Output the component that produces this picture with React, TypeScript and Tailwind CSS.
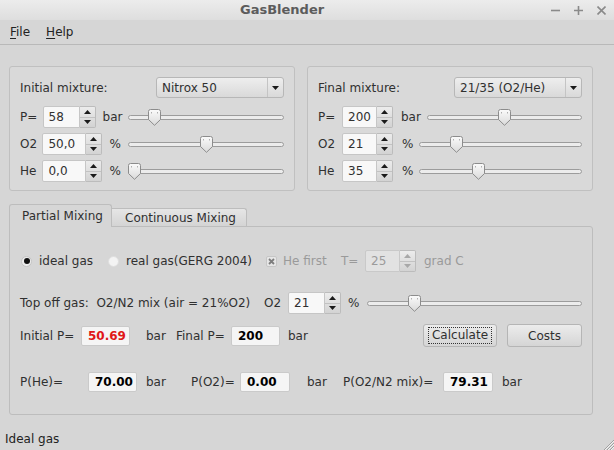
import React from "react";

const Tri = ({ up, color = "#1a1a1a" }: { up?: boolean; color?: string }) => (
  <svg width="7" height="4" viewBox="0 0 7 4">
    <path d={up ? "M0 4 L3.5 0 L7 4 Z" : "M0 0 L7 0 L3.5 4 Z"} fill={color} />
  </svg>
);

const SpinBox = ({ value, fieldW, disabled }: { value: string; fieldW: string; disabled?: boolean }) => (
  <div className="flex h-[22px] shrink-0">
    <div
      className={
        disabled
          ? `${fieldW} flex items-center pl-[5px] bg-[#e2e2e2] border border-[#c9c9c9] rounded-l-[2px] text-[#9b9b9b]`
          : `${fieldW} flex items-center pl-[5px] bg-[#f8f8f8] border border-[#c6c6c6] rounded-l-[2px]`
      }
    >
      {value}
    </div>
    <div className="w-[16px] flex flex-col border border-l-0 border-[#bcbcbc] rounded-r-[2px] bg-linear-to-b from-[#ececec] to-[#d3d3d3]">
      <div className="flex-1 flex items-center justify-center border-b border-[#c2c2c2]">
        <Tri up color={disabled ? "#a8a8a8" : "#1a1a1a"} />
      </div>
      <div className="flex-1 flex items-center justify-center">
        <Tri color={disabled ? "#a8a8a8" : "#1a1a1a"} />
      </div>
    </div>
  </div>
);

const Handle = () => (
  <svg width="13" height="17" viewBox="0 0 13 17">
    <defs>
      <linearGradient id="hg" x1="0" y1="0" x2="0" y2="1">
        <stop offset="0" stopColor="#fbfbfb" />
        <stop offset="1" stopColor="#dadada" />
      </linearGradient>
    </defs>
    <path d="M0.5 2.5 Q0.5 0.5 2.5 0.5 H10.5 Q12.5 0.5 12.5 2.5 V10.5 L6.5 16.3 L0.5 10.5 Z" fill="url(#hg)" stroke="#8c8c8c" />
    <path d="M3.5 3 L3.5 4.5 M9.5 3 L9.5 4.5" stroke="#b0b0b0" />
  </svg>
);

const Slider = ({ w, pos }: { w: string; pos: string }) => (
  <div className={`${w} relative h-[22px] flex items-center shrink-0`}>
    <div className="w-full h-[5px] rounded-full border border-[#9c9c9c] bg-[#ececec]" />
    <div className={`absolute top-[3px] ${pos}`}>
      <Handle />
    </div>
  </div>
);

const Combo = ({ text, w }: { text: string; w: string }) => (
  <div className={`${w} h-[21px] flex rounded-[3px] border border-[#b7b7b7] bg-linear-to-b from-[#eeeeee] to-[#d9d9d9] shrink-0`}>
    <div className="flex-1 flex items-center pl-[5px]">{text}</div>
    <div className="w-[16px] flex items-center justify-center border-l border-[#c4c4c4]">
      <Tri />
    </div>
  </div>
);

const Value = ({ v, w, red }: { v: string; w: string; red?: boolean }) => (
  <div
    className={
      red
        ? `${w} h-[20px] flex items-center pl-[6px] bg-[#f5f5f5] border border-[#cacaca] rounded-[2px] font-bold text-[#e01818] shrink-0`
        : `${w} h-[20px] flex items-center pl-[6px] bg-[#f5f5f5] border border-[#cacaca] rounded-[2px] font-bold text-black shrink-0`
    }
  >
    {v}
  </div>
);

const Btn = ({ children, focus }: { children: string; focus?: boolean }) => (
  <div className="w-full h-[23px] flex items-center justify-center rounded-[3px] border border-[#b5b5b5] bg-linear-to-b from-[#ececec] to-[#d5d5d5]">
    {focus ? <span className="px-[3px] leading-[15px] border border-dotted border-[#333]">{children}</span> : children}
  </div>
);

export default function App() {
  return (
    <div className="relative w-[614px] h-[450px] overflow-hidden bg-[#d6d6d6] text-[12px] text-[#303030] font-['DejaVu_Sans',sans-serif] flex flex-col">
      {/* title bar */}
      <div className="h-[20px] flex items-center bg-linear-to-b from-[#ececec] to-[#dedede] shrink-0">
        <div className="pl-[240px] text-[13px] font-bold text-[#5c5c5c]">GasBlender</div>
        <div className="ml-auto flex items-center gap-[14px] pr-[8px]">
          <svg width="9" height="9" viewBox="0 0 9 9"><path d="M0 4.5 H9" stroke="#8a8a8a" strokeWidth="1.6" /></svg>
          <svg width="9" height="9" viewBox="0 0 9 9"><path d="M0 4.5 H9 M4.5 0 V9" stroke="#8a8a8a" strokeWidth="1.6" /></svg>
          <svg width="9" height="9" viewBox="0 0 9 9"><path d="M0.5 0.5 L8.5 8.5 M8.5 0.5 L0.5 8.5" stroke="#8a8a8a" strokeWidth="1.6" /></svg>
        </div>
      </div>

      {/* menu */}
      <div className="h-[25px] flex items-center border-b border-[#b9b9b9] text-[#222] shrink-0">
        <span className="pl-[10px]"><span className="underline underline-offset-2">F</span>ile</span>
        <span className="pl-[16px]"><span className="underline underline-offset-2">H</span>elp</span>
      </div>

      <div className="px-[9px] pt-[21px] flex flex-col">
        {/* mixture groups */}
        <div className="flex gap-[12px]">
          <div className="w-[286px] h-[125px] rounded-[3px] border border-[#c0c0c0] bg-[#d9d9d9] pt-[10px] pl-[10px] pr-[10px] flex flex-col">
            <div className="flex items-center">
              <span className="w-[137px]">Initial mixture:</span>
              <Combo text="Nitrox 50" w="w-[128px]" />
            </div>
            <div className="flex flex-col gap-[5px] mt-[8px]">
              <div className="flex items-center">
                <span className="w-[23px]">P=</span>
                <SpinBox value="58" fieldW="w-[37px]" />
                <span className="w-[33px] pl-[7px]">bar</span>
                <Slider w="w-[156px]" pos="left-[20px]" />
              </div>
              <div className="flex items-center">
                <span className="w-[23px]">O2</span>
                <SpinBox value="50,0" fieldW="w-[44px]" />
                <span className="w-[26px] pl-[7px]">%</span>
                <Slider w="w-[156px]" pos="left-[72px]" />
              </div>
              <div className="flex items-center">
                <span className="w-[23px]">He</span>
                <SpinBox value="0,0" fieldW="w-[44px]" />
                <span className="w-[26px] pl-[7px]">%</span>
                <Slider w="w-[156px]" pos="left-[0px]" />
              </div>
            </div>
          </div>

          <div className="w-[286px] h-[125px] rounded-[3px] border border-[#c0c0c0] bg-[#d9d9d9] pt-[10px] pl-[10px] pr-[10px] flex flex-col">
            <div className="flex items-center">
              <span className="w-[136px]">Final mixture:</span>
              <Combo text="21/35 (O2/He)" w="w-[128px]" />
            </div>
            <div className="flex flex-col gap-[5px] mt-[8px]">
              <div className="flex items-center">
                <span className="w-[24px]">P=</span>
                <SpinBox value="200" fieldW="w-[35px]" />
                <span className="w-[34px] pl-[8px]">bar</span>
                <Slider w="w-[155px]" pos="left-[71px]" />
              </div>
              <div className="flex items-center">
                <span className="w-[24px]">O2</span>
                <SpinBox value="21" fieldW="w-[35px]" />
                <span className="w-[26px] pl-[9px]">%</span>
                <Slider w="w-[163px]" pos="left-[31px]" />
              </div>
              <div className="flex items-center">
                <span className="w-[24px]">He</span>
                <SpinBox value="35" fieldW="w-[35px]" />
                <span className="w-[26px] pl-[9px]">%</span>
                <Slider w="w-[163px]" pos="left-[53px]" />
              </div>
            </div>
          </div>
        </div>

        {/* tabs */}
        <div className="mt-[13px] flex flex-col">
          <div className="flex items-end h-[22px]">
            <div className="w-[103px] h-[23px] -mb-[1px] z-10 flex items-center pl-[12px] rounded-t-[3px] border border-b-0 border-[#bdbdbd] bg-[#d6d6d6]">
              Partial Mixing
            </div>
            <div className="w-[135px] h-[18px] flex items-center pl-[13px] rounded-tr-[3px] border border-l-0 border-b-0 border-[#bdbdbd] bg-linear-to-b from-[#e6e6e6] to-[#d4d4d4]">
              Continuous Mixing
            </div>
          </div>
          <div className="w-[584px] h-[189px] border border-[#bdbdbd] rounded-b-[3px] rounded-tr-[3px] bg-[#d6d6d6] flex flex-col pt-[23px]">
            {/* radio row */}
            <div className="h-[22px] flex items-center pl-[11px]">
              <span className="w-[11px] h-[11px] rounded-full bg-[#ececec] border border-[#c4c4c4] flex items-center justify-center shrink-0">
                <span className="w-[6px] h-[6px] rounded-full bg-[#111]" />
              </span>
              <span className="w-[76px] pl-[7px] shrink-0">ideal gas</span>
              <span className="w-[11px] h-[11px] rounded-full bg-[#f3f3f3] border border-[#dedede] shrink-0" />
              <span className="w-[147px] pl-[7px] shrink-0">real gas(GERG 2004)</span>
              <span className="w-[11px] h-[11px] rounded-[2px] bg-[#e6e6e6] border border-[#c6c6c6] flex items-center justify-center shrink-0">
                <svg width="7" height="7" viewBox="0 0 7 7"><path d="M1 1 L6 6 M6 1 L1 6" stroke="#7d7d7d" strokeWidth="1.8" /></svg>
              </span>
              <span className="w-[64px] pl-[6px] text-[#9a9a9a] shrink-0">He first</span>
              <span className="w-[24px] text-[#9a9a9a] shrink-0">T=</span>
              <SpinBox value="25" fieldW="w-[35px]" disabled />
              <span className="pl-[8px] text-[#9a9a9a]">grad C</span>
            </div>
            {/* top off row */}
            <div className="h-[22px] flex items-center pl-[10px] mt-[20px]">
              <span className="w-[244px] shrink-0 whitespace-pre">Top off gas:  O2/N2 mix (air = 21%O2)</span>
              <span className="w-[24px] shrink-0">O2</span>
              <SpinBox value="21" fieldW="w-[37px]" />
              <span className="w-[26px] pl-[7px] shrink-0">%</span>
              <Slider w="w-[215px]" pos="left-[41px]" />
            </div>
            {/* pressure row */}
            <div className="h-[23px] flex items-center pl-[10px] mt-[10px]">
              <span className="w-[61px] shrink-0">Initial P=</span>
              <Value v="50.69" w="w-[49px]" red />
              <span className="w-[46px] pl-[16px] shrink-0">bar</span>
              <span className="w-[55px] shrink-0">Final P=</span>
              <Value v="200" w="w-[49px]" />
              <span className="w-[143px] pl-[8px] shrink-0">bar</span>
              <div className="w-[74px] shrink-0">
                <Btn focus>Calculate</Btn>
              </div>
              <div className="w-[75px] ml-[10px] shrink-0">
                <Btn>Costs</Btn>
              </div>
            </div>
            {/* results row */}
            <div className="h-[22px] flex items-center pl-[10px] mt-[24px]">
              <span className="w-[68px] shrink-0">P(He)=</span>
              <Value v="70.00" w="w-[49px]" />
              <span className="w-[54px] pl-[9px] shrink-0">bar</span>
              <span className="w-[49px] shrink-0">P(O2)=</span>
              <Value v="0.00" w="w-[50px]" />
              <span className="w-[53px] pl-[17px] shrink-0">bar</span>
              <span className="w-[100px] shrink-0">P(O2/N2 mix)=</span>
              <Value v="79.31" w="w-[50px]" />
              <span className="pl-[9px]">bar</span>
            </div>
          </div>
        </div>
      </div>

      {/* status bar */}
      <div className="mt-[17px] pl-[5px] leading-[15px] text-[#222]">Ideal gas</div>
      <svg className="absolute right-0 bottom-0" width="12" height="12" viewBox="0 0 12 12">
        <path d="M12 2 L2 12 M12 5 L5 12 M12 8 L8 12" stroke="#a0a0a0" strokeWidth="1" />
        <path d="M12 3 L3 12 M12 6 L6 12 M12 9 L9 12" stroke="#f2f2f2" strokeWidth="1" />
      </svg>
    </div>
  );
}
